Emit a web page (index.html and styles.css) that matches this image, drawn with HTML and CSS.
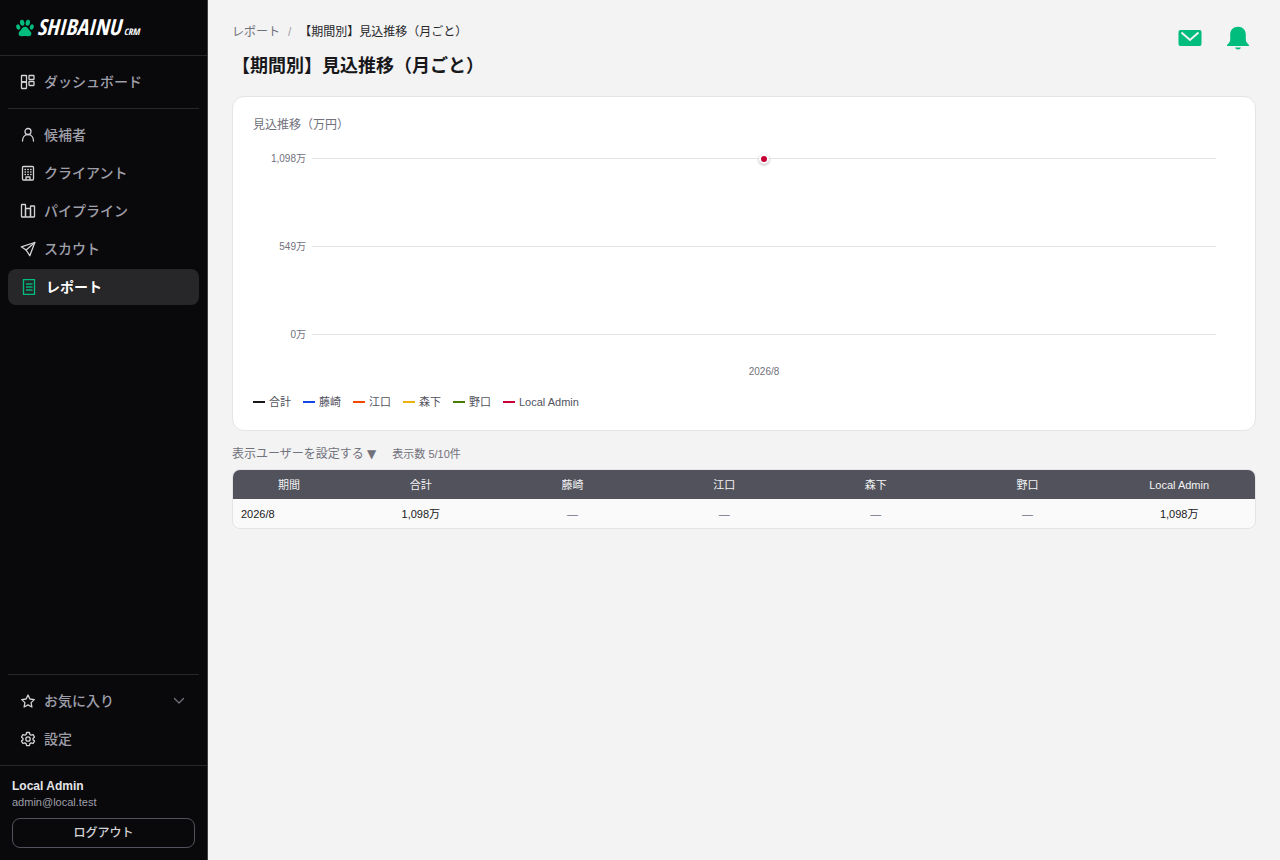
FILE: index.html
```html
<!DOCTYPE html>
<html lang="ja">
	<head>
		<meta charset="UTF-8">
		<meta name="viewport" content="width=device-width, initial-scale=1">
		<title>【期間別】見込推移（月ごと）</title>
		<link rel="stylesheet" href="styles.css">
	</head>
	<body>
		<aside class="sidebar">
			<a class="logo" href="#">
				<svg class="paw" width="18" height="18" viewBox="0 0 18 18" fill="currentColor">
					<ellipse cx="6.200" cy="3.800" rx="2.200" ry="3" transform="rotate(-8 6.200 3.800)"/>
					<ellipse cx="11.800" cy="3.800" rx="2.200" ry="3" transform="rotate(8 11.800 3.800)"/>
					<ellipse cx="2.200" cy="8" rx="1.900" ry="2.700" transform="rotate(-20 2.200 8)"/>
					<ellipse cx="15.800" cy="8" rx="1.900" ry="2.700" transform="rotate(20 15.800 8)"/>
					<path d="M9 7.700c-2 0-3.200 1.500-4 3-.9 1.400-2.400 1.900-2.400 4 0 1.700 1.300 2.500 2.800 2.500 1.300 0 2.100-.3 3.600-.3s2.300.3 3.600.3c1.500 0 2.800-.8 2.800-2.500 0-2.100-1.500-2.600-2.400-4-.8-1.500-2-3-4-3z"/>
				</svg>
				<span class="logo-name">SHIBAINU</span>
				<span class="logo-sub">CRM</span>
			</a>
			<nav class="nav">
				<div class="nav-group">
					<a class="nav-item" href="#">
						<svg class="icon" viewBox="0 0 16 16"><rect x="1.500" y="1.500" width="5" height="6.500" rx=".5"/><rect x="1.500" y="8" width="5" height="6.500" rx=".5"/><rect x="9" y="1.500" width="5" height="4" rx=".5"/><rect x="9" y="7.500" width="5" height="4" rx=".5"/></svg>
						ダッシュボード
					</a>
				</div>
				<div class="nav-group">
					<a class="nav-item" href="#">
						<svg class="icon" viewBox="0 0 16 16"><circle cx="8" cy="4.500" r="3"/><path d="M2.500 14c0-3.800 2.300-6.500 5.500-6.500s5.500 2.700 5.500 6.500"/></svg>
						候補者
					</a>
					<a class="nav-item" href="#">
						<svg class="icon" viewBox="0 0 16 16"><rect x="2.500" y="1.500" width="11" height="13.500" rx="1"/><path d="M6 14.500v-2.500h4v2.500"/><path d="M5 4.500h.5M7.800 4.500h.5M10.600 4.500h.5M5 7h.5M7.800 7h.5M10.600 7h.5M5 9.500h.5M7.800 9.500h.5M10.600 9.500h.5"/></svg>
						クライアント
					</a>
					<a class="nav-item" href="#">
						<svg class="icon" viewBox="0 0 16 16"><rect x="1.500" y="1.500" width="4" height="12.500" rx=".5"/><rect x="5.500" y="5.500" width="5" height="8.500" rx=".5"/><rect x="10.500" y="3" width="4" height="11" rx=".5"/></svg>
						パイプライン
					</a>
					<a class="nav-item" href="#">
						<svg class="icon" viewBox="0 0 16 16"><path d="M14.800 1.500L1.300 5.800l4.800 3.200L9.800 14.700z"/><path d="M14.800 1.500L6.100 9"/></svg>
						スカウト
					</a>
					<a class="nav-item active" href="#">
						<svg class="icon icon-report" viewBox="0 0 18 16"><path d="M3.500.5h11v15h-11z"/><path class="lines" d="M6 5h6.500M6 8h6.500M6 11h6.500"/></svg>
						レポート
					</a>
				</div>
			</nav>
			<div class="nav nav-bottom">
				<div class="nav-group">
					<a class="nav-item" href="#">
						<svg class="icon" viewBox="0 0 16 16"><path d="M8 2l1.900 4 4.400.6-3.200 3 .8 4.400L8 11.900 4.100 14l.8-4.400-3.200-3L6.100 6z"/></svg>
						お気に入り
						<svg class="icon chevron" viewBox="0 0 16 16"><path d="M3.500 5.500L8 10l4.500-4.500"/></svg>
					</a>
					<a class="nav-item" href="#">
						<svg class="icon" viewBox="0 0 16 16"><path d="M6.600 1.500h2.800l.5 2 1.200.7 2-.6 1.400 2.400-1.500 1.400v1.300l1.500 1.400-1.400 2.400-2-.6-1.200.7-.5 2H6.600l-.5-2-1.200-.7-2 .6-1.400-2.400L3 8.700V7.400L1.500 6l1.400-2.400 2 .6 1.200-.7z"/><circle cx="8" cy="8" r="2.200"/></svg>
						設定
					</a>
				</div>
			</div>
			<div class="user">
				<div class="user-name">Local Admin</div>
				<div class="user-mail">admin@local.test</div>
				<button class="logout" type="button">ログアウト</button>
			</div>
		</aside>

		<main class="main">
			<header class="head">
				<div>
					<div class="crumbs">
						<a href="#">レポート</a>
						<span class="slash">/</span>
						<span class="current">【期間別】見込推移（月ごと）</span>
					</div>
					<h1>【期間別】見込推移（月ごと）</h1>
				</div>
				<div class="actions">
					<button type="button" aria-label="メール">
						<svg width="24" height="24" viewBox="0 0 24 24"><rect x=".5" y="4" width="23" height="16" rx="2" fill="#00bc7d"/><path d="M3.500 6.500l8.500 7.500 8.500-7.500" fill="none" stroke="#f3f3f3" stroke-width="2"/></svg>
					</button>
					<button type="button" aria-label="通知">
						<svg width="24" height="24" viewBox="0 0 24 24" fill="#00bc7d"><path d="M12 .7c-4.700 0-7.800 3.300-7.800 7.800v5c0 2-.7 3.200-2.500 4.700-1.200 1-.9 1.800.3 1.800h20c1.200 0 1.500-.8.3-1.800-1.800-1.500-2.500-2.700-2.500-4.700v-5C19.800 4 16.700.7 12 .7z"/><path d="M9 21.400h6c-.5 1.300-1.500 2-3 2s-2.500-.7-3-2z"/></svg>
					</button>
				</div>
			</header>

			<section class="card">
				<h2>見込推移（万円）</h2>
				<div class="chart">
					<div class="grid-row"><span>1,098万</span><i></i></div>
					<div class="grid-row"><span>549万</span><i></i></div>
					<div class="grid-row"><span>0万</span><i></i></div>
					<div class="point"></div>
				</div>
				<div class="x-label">2026/8</div>
				<ul class="legend">
					<li class="total">合計</li>
					<li class="blue">藤崎</li>
					<li class="orange">江口</li>
					<li class="yellow">森下</li>
					<li class="green">野口</li>
					<li class="red">Local Admin</li>
				</ul>
			</section>

			<div class="tools">
				<button type="button">表示ユーザーを設定する <span class="caret">▼</span></button>
				<span>表示数 5/10件</span>
			</div>

			<div class="table-wrap">
				<table>
					<thead>
						<tr>
							<th class="period">期間</th>
							<th>合計</th>
							<th>藤崎</th>
							<th>江口</th>
							<th>森下</th>
							<th>野口</th>
							<th>Local Admin</th>
						</tr>
					</thead>
					<tbody>
						<tr>
							<td class="period">2026/8</td>
							<td>1,098万</td>
							<td class="none">—</td>
							<td class="none">—</td>
							<td class="none">—</td>
							<td class="none">—</td>
							<td>1,098万</td>
						</tr>
					</tbody>
				</table>
			</div>
		</main>
	</body>
</html>
```
FILE: styles.css
```css
*{
	box-sizing:border-box;
}
body{
	margin:0;
	display:flex;
	min-height:100vh;
	background:#f3f3f3;
	color:#18181b;
	font-family:"Liberation Sans","Noto Sans CJK JP",sans-serif;
	font-size:12px;
	line-height:16px;
}
a{
	color:inherit;
	text-decoration:none;
}
button{
	font-family:inherit;
	padding:0;
	border:none;
	background:none;
	cursor:pointer;
}

/* sidebar */
.sidebar{
	display:flex;
	flex-direction:column;
	flex:none;
	width:208px;
	background:#09090b;
	border-right:1px solid #3f3f46;
}
.logo{
	display:flex;
	align-items:center;
	gap:3px;
	height:56px;
	padding:0 16px;
	border-bottom:1px solid #27272a;
	color:#fff;
	font-family:"Open Sans Condensed","Noto Sans Condensed","Liberation Sans Narrow","Open Sans",sans-serif;
	font-weight:bold;
	font-style:italic;
}
.paw{
	flex:none;
	color:#00bc7d;
}
.logo-name{
	padding-bottom:4px;
	font-size:22px;
	line-height:24px;
}
.logo-sub{
	padding-top:8px;
	font-size:9px;
	line-height:8px;
}
.nav{
	padding:0 8px;
}
.nav-group{
	display:flex;
	flex-direction:column;
	gap:2px;
	padding:8px 0;
}
.nav-group + .nav-group,
.nav-bottom .nav-group{
	border-top:1px solid #27272a;
}
.nav-bottom{
	margin-top:auto;
}
.nav-item{
	display:flex;
	align-items:center;
	gap:8px;
	height:36px;
	padding:0 12px;
	border-radius:8px;
	color:#9f9fa9;
	font-size:14px;
	font-weight:500;
}
.nav-item.active{
	background:#27272a;
	color:#fff;
	font-weight:bold;
}
.icon{
	flex:none;
	width:16px;
	height:16px;
	fill:none;
	stroke:#d4d4d8;
	stroke-width:1.3;
	stroke-linejoin:round;
	stroke-linecap:round;
}
.icon-report{
	width:18px;
	stroke:#00bc7d;
	stroke-linejoin:miter;
	stroke-linecap:butt;
}
.icon-report .lines{
	stroke:#0a8f63;
	stroke-width:2;
}
.chevron{
	margin-left:auto;
	stroke:#71717b;
}
.user{
	padding:12px;
	border-top:1px solid #27272a;
}
.user-name{
	color:#e4e4e7;
	font-weight:bold;
}
.user-mail{
	color:#9f9fa9;
	font-size:11px;
}
.logout{
	display:block;
	width:100%;
	height:30px;
	margin-top:8px;
	padding-bottom:3px;
	border:1px solid #52525c;
	border-radius:8px;
	color:#d4d4d8;
	font-size:12px;
	font-weight:500;
}

/* page */
.main{
	flex:1;
	min-width:0;
	padding:23px 24px;
}
.head{
	display:flex;
	justify-content:space-between;
	align-items:flex-start;
	margin-bottom:17px;
}
.crumbs{
	display:flex;
	gap:8px;
	line-height:18px;
	color:#71717b;
}
.slash{
	color:#9f9fa9;
}
.current{
	color:#27272a;
}
h1{
	margin:12px 0 0;
	font-size:18px;
	line-height:26px;
}
.actions{
	display:flex;
	gap:24px;
	padding:3px 6px 0;
}
.actions svg{
	display:block;
}
.card{
	padding:19px 20px 20px;
	background:#fff;
	border:1px solid #e4e4e7;
	border-radius:12px;
}
h2{
	margin:0;
	color:#71717b;
	font-size:12px;
	font-weight:normal;
	line-height:18px;
}
.chart{
	position:relative;
	padding:16px 19px 0 0;
}
.grid-row{
	display:flex;
	align-items:center;
	gap:6px;
	height:17px;
	margin-bottom:71px;
	color:#71717b;
	font-size:10px;
}
.grid-row:nth-child(3){
	margin-bottom:21px;
}
.grid-row span{
	width:53px;
	text-align:right;
}
.grid-row i{
	flex:1;
	height:1px;
	background:#e4e4e7;
}
/* the only month sits in the middle of the plot area */
.point{
	position:absolute;
	top:20px;
	left:calc(50% + 20px);
	width:10px;
	height:10px;
	margin-left:-5px;
	border:2px solid #fff;
	border-radius:50%;
	background:#c70036;
	box-shadow:0 1px 3px rgba(0,0,0,0.3);
}
.x-label{
	padding-left:40px;
	color:#71717b;
	font-size:10px;
	text-align:center;
}
.legend{
	display:flex;
	gap:12px;
	margin:14px 0 0;
	padding:0;
	list-style:none;
	color:#52525c;
	font-size:11px;
}
.legend li{
	display:flex;
	align-items:center;
	gap:4px;
}
.legend li::before{
	content:"";
	width:12px;
	height:2px;
	background:#18181b;
}
.legend .blue::before{
	background:#1447e6;
}
.legend .orange::before{
	background:#f54900;
}
.legend .yellow::before{
	background:#efb100;
}
.legend .green::before{
	background:#497d00;
}
.legend .red::before{
	background:#c70036;
}
.tools{
	display:flex;
	align-items:center;
	gap:16px;
	padding:14px 0 6px;
	color:#71717b;
	font-size:11px;
	line-height:18px;
}
.tools button{
	color:#71717b;
	font-size:12px;
	line-height:18px;
}
.caret{
	font-family:"DejaVu Sans",sans-serif;
}
.table-wrap{
	border:1px solid #e4e4e7;
	border-radius:8px;
	overflow:hidden;
}
table{
	width:100%;
	table-layout:fixed;
	border-collapse:collapse;
	font-size:11px;
}
th,
td{
	height:29px;
	padding:0 8px;
	text-align:center;
}
th{
	background:#52525c;
	color:#f4f4f5;
	font-weight:normal;
}
td{
	background:#fafafa;
}
.period{
	width:112px;
}
td.period{
	text-align:left;
}
.none{
	color:#71717b;
}
```
